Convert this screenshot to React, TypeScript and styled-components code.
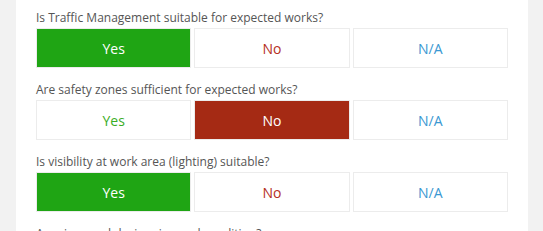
import * as React from "react";
import styled, { createGlobalStyle } from "styled-components";

const GlobalStyle = createGlobalStyle`
  html, body {
    margin: 0;
    padding: 0;
    background: #f2f2f2;
    font-family: "Open Sans", "Liberation Sans", sans-serif;
  }
`;

type Answer = "yes" | "no" | "na";

const ANSWER_LABELS: Record<Answer, string> = {
  yes: "Yes",
  no: "No",
  na: "N/A"
};

const ANSWER_TEXT_COLORS: Record<Answer, string> = {
  yes: "#3aad26",
  no: "#b5301f",
  na: "#3a98d2"
};

const ANSWER_FILL_COLORS: Record<Answer, string> = {
  yes: "#1fa514",
  no: "#a52a14",
  na: "#3a98d2"
};

const Page = styled.div`
  display: flex;
  height: 231px;
  overflow: hidden;
  padding: 0 15px 0 16px;
`;

const Panel = styled.div`
  flex: 1;
  background: #ffffff;
  padding: 8px 20px 0 20px;
`;

const Question = styled.div`
  margin-bottom: 12px;
`;

const Label = styled.div`
  font-size: 12px;
  line-height: 20px;
  color: #555555;
  white-space: nowrap;
`;

const Options = styled.div`
  display: grid;
  grid-template-columns: 1fr 1fr 1fr;
  gap: 3px;
`;

const Option: any = styled.button`
  height: 40px;
  border: 1px solid #ececec;
  margin: 0;
  padding: 0;
  font-family: "Open Sans", "Liberation Sans", sans-serif;
  font-size: 14px;
  cursor: pointer;
  background: ${(props: any) =>
    props.selected ? ANSWER_FILL_COLORS[props.kind as Answer] : "#ffffff"};
  color: ${(props: any) =>
    props.selected ? "#ffffff" : ANSWER_TEXT_COLORS[props.kind as Answer]};
`;

const QUESTIONS: { text: string; answer: Answer | null }[] = [
  { text: "Is Traffic Management suitable for expected works?", answer: "yes" },
  { text: "Are safety zones sufficient for expected works?", answer: "no" },
  { text: "Is visibility at work area (lighting) suitable?", answer: "yes" },
  { text: "Are signs and devices in good condition?", answer: null }
];

const App = () => {
  const [answers, setAnswers] = React.useState(QUESTIONS.map(q => q.answer));

  const choose = (index: number, value: Answer) => {
    const next = [...answers];
    next[index] = value;
    setAnswers(next);
  };

  return (
    <>
      <GlobalStyle />
      <Page>
        <Panel>
          {QUESTIONS.map((q, i) => (
            <Question key={q.text}>
              <Label>{q.text}</Label>
              <Options>
                {(["yes", "no", "na"] as Answer[]).map(kind => (
                  <Option
                    key={kind}
                    kind={kind}
                    selected={answers[i] === kind}
                    onClick={() => choose(i, kind)}
                  >
                    {ANSWER_LABELS[kind]}
                  </Option>
                ))}
              </Options>
            </Question>
          ))}
        </Panel>
      </Page>
    </>
  );
};

export default App;
